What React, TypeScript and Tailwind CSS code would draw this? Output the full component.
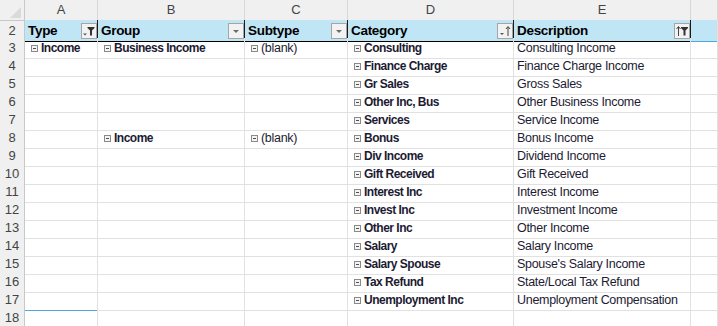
import type { ReactNode } from "react";

type Row = { n: number; a?: string; b?: string; c?: string; d?: string; e?: string };

const rows: Row[] = [
  { n: 3, a: "Income", b: "Business Income", c: "(blank)", d: "Consulting", e: "Consulting Income" },
  { n: 4, d: "Finance Charge", e: "Finance Charge Income" },
  { n: 5, d: "Gr Sales", e: "Gross Sales" },
  { n: 6, d: "Other Inc, Bus", e: "Other Business Income" },
  { n: 7, d: "Services", e: "Service Income" },
  { n: 8, b: "Income", c: "(blank)", d: "Bonus", e: "Bonus Income" },
  { n: 9, d: "Div Income", e: "Dividend Income" },
  { n: 10, d: "Gift Received", e: "Gift Received" },
  { n: 11, d: "Interest Inc", e: "Interest Income" },
  { n: 12, d: "Invest Inc", e: "Investment Income" },
  { n: 13, d: "Other Inc", e: "Other Income" },
  { n: 14, d: "Salary", e: "Salary Income" },
  { n: 15, d: "Salary Spouse", e: "Spouse's Salary Income" },
  { n: 16, d: "Tax Refund", e: "State/Local Tax Refund" },
  { n: 17, d: "Unemployment Inc", e: "Unemployment Compensation" },
  { n: 18 },
];

const grid = "grid grid-cols-[25px_73px_147px_103px_166px_177px_1fr]";

function Collapse() {
  return (
    <span className="relative inline-block w-[7px] h-[7px] border border-[#8a8a8a] bg-[#f4f4f4] mr-[3px] shrink-0">
      <span className="absolute left-[1px] right-[1px] top-[2px] h-px bg-[#505050]" />
    </span>
  );
}

function FilterBtn({ kind }: { kind: "filter" | "drop" | "sort" | "sortfilter" }) {
  return (
    <div className="w-[16px] h-[16px] border border-[#a6a6a6] bg-[#f2f2f2] flex items-center justify-center">
      <svg width="14" height="14" viewBox="0 0 14 14">
        {kind === "drop" && <path d="M4 6 L10 6 L7 9 Z" fill="#6b6b6b" />}
        {kind === "filter" && (
          <>
            <path d="M1 9.5 L5 9.5 L3 11.5 Z" fill="#555" />
            <path d="M5.5 3 L12.5 3 L12.5 4 L10 6.5 L10 11.5 L8 11.5 L8 6.5 L5.5 4 Z" fill="#333" />
          </>
        )}
        {kind === "sort" && (
          <>
            <path d="M2 9 L6 9 L4 11 Z" fill="#555" />
            <path d="M10 3 L10 12" stroke="#444" strokeWidth="1" />
            <path d="M8 5 L10 2.5 L12 5" stroke="#444" strokeWidth="1" fill="none" />
          </>
        )}
        {kind === "sortfilter" && (
          <>
            <path d="M3.5 3 L3.5 12" stroke="#444" strokeWidth="1" />
            <path d="M1.5 5 L3.5 2.5 L5.5 5" stroke="#444" strokeWidth="1" fill="none" />
            <path d="M6 3 L13 3 L13 4 L10.5 6.5 L10.5 11.5 L8.5 11.5 L8.5 6.5 L6 4 Z" fill="#333" />
          </>
        )}
      </svg>
    </div>
  );
}

function HeadCell({ label, kind }: { label: string; kind: "filter" | "drop" | "sort" | "sortfilter" }) {
  return (
    <div className="flex items-center justify-between bg-[#c0e6f5] border-r border-r-[#1a1a1a] border-b border-b-black pl-[3px]">
      <span className="text-[13.5px] font-bold tracking-[-0.3px] text-black pt-[1px]">{label}</span>
      <FilterBtn kind={kind} />
    </div>
  );
}

function Cell({ children, bold, icon, extra = "" }: { children?: ReactNode; bold?: boolean; icon?: boolean; extra?: string }) {
  return (
    <div className={`flex items-center border-r border-b border-[#e1e1e1] overflow-hidden whitespace-nowrap ${extra}`}>
      {children && (
        <span className={`flex items-center text-[#1d1b33] pt-[1px] ${icon ? "pl-[6px]" : "pl-[3px]"}`}>
          {icon && <Collapse />}
          <span
            className={
              bold
                ? "text-[12px] font-bold tracking-[-0.5px] leading-[17px]"
                : "text-[12.5px] tracking-[-0.3px] leading-[17px]"
            }
          >
            {children}
          </span>
        </span>
      )}
    </div>
  );
}

export default function App() {
  return (
    <div className="w-[718px] h-[326px] overflow-hidden bg-white font-['Liberation_Sans',Arial,sans-serif]">
      <div className={`${grid} h-[20px] bg-[#f0f0f0] text-[13px] text-[#444]`}>
        <div className="relative border-r border-b border-[#c8c8c8]">
          <div className="absolute right-[3px] bottom-[2px] w-0 h-0 border-l-[11px] border-l-transparent border-b-[11px] border-b-[#dadada]" />
        </div>
        {["A", "B", "C", "D", "E", ""].map((l, i) => (
          <div key={i} className="flex items-center justify-center border-r border-b border-r-[#d8d8d8] border-b-[#c8c8c8]">
            {l}
          </div>
        ))}
      </div>
      <div className={`${grid} h-[18px]`}>
        <div className="flex items-center justify-center bg-[#f0f0f0] border-r border-b border-r-[#c8c8c8] border-b-[#e1e1e1] text-[13px] text-[#444]">2</div>
        <HeadCell label="Type" kind="filter" />
        <HeadCell label="Group" kind="drop" />
        <HeadCell label="Subtype" kind="drop" />
        <HeadCell label="Category" kind="sort" />
        <HeadCell label="Description" kind="sortfilter" />
        <div className="bg-[#c0e6f5] border-b border-b-[#4ea9dc] border-r border-r-[#e1e1e1]" />
      </div>
      {rows.map((r) => (
        <div key={r.n} className={`${grid} h-[18px]`}>
          <div className="flex items-center justify-center bg-[#f0f0f0] border-r border-b border-r-[#c8c8c8] border-b-[#e1e1e1] text-[13px] text-[#444]">
            {r.n}
          </div>
          <Cell bold icon extra={r.n === 17 ? "border-b-[#4ea9dc]" : ""}>{r.a}</Cell>
          <Cell bold icon>{r.b}</Cell>
          <Cell icon>{r.c}</Cell>
          <Cell bold icon>{r.d}</Cell>
          <Cell>{r.e}</Cell>
          <Cell />
        </div>
      ))}
    </div>
  );
}
